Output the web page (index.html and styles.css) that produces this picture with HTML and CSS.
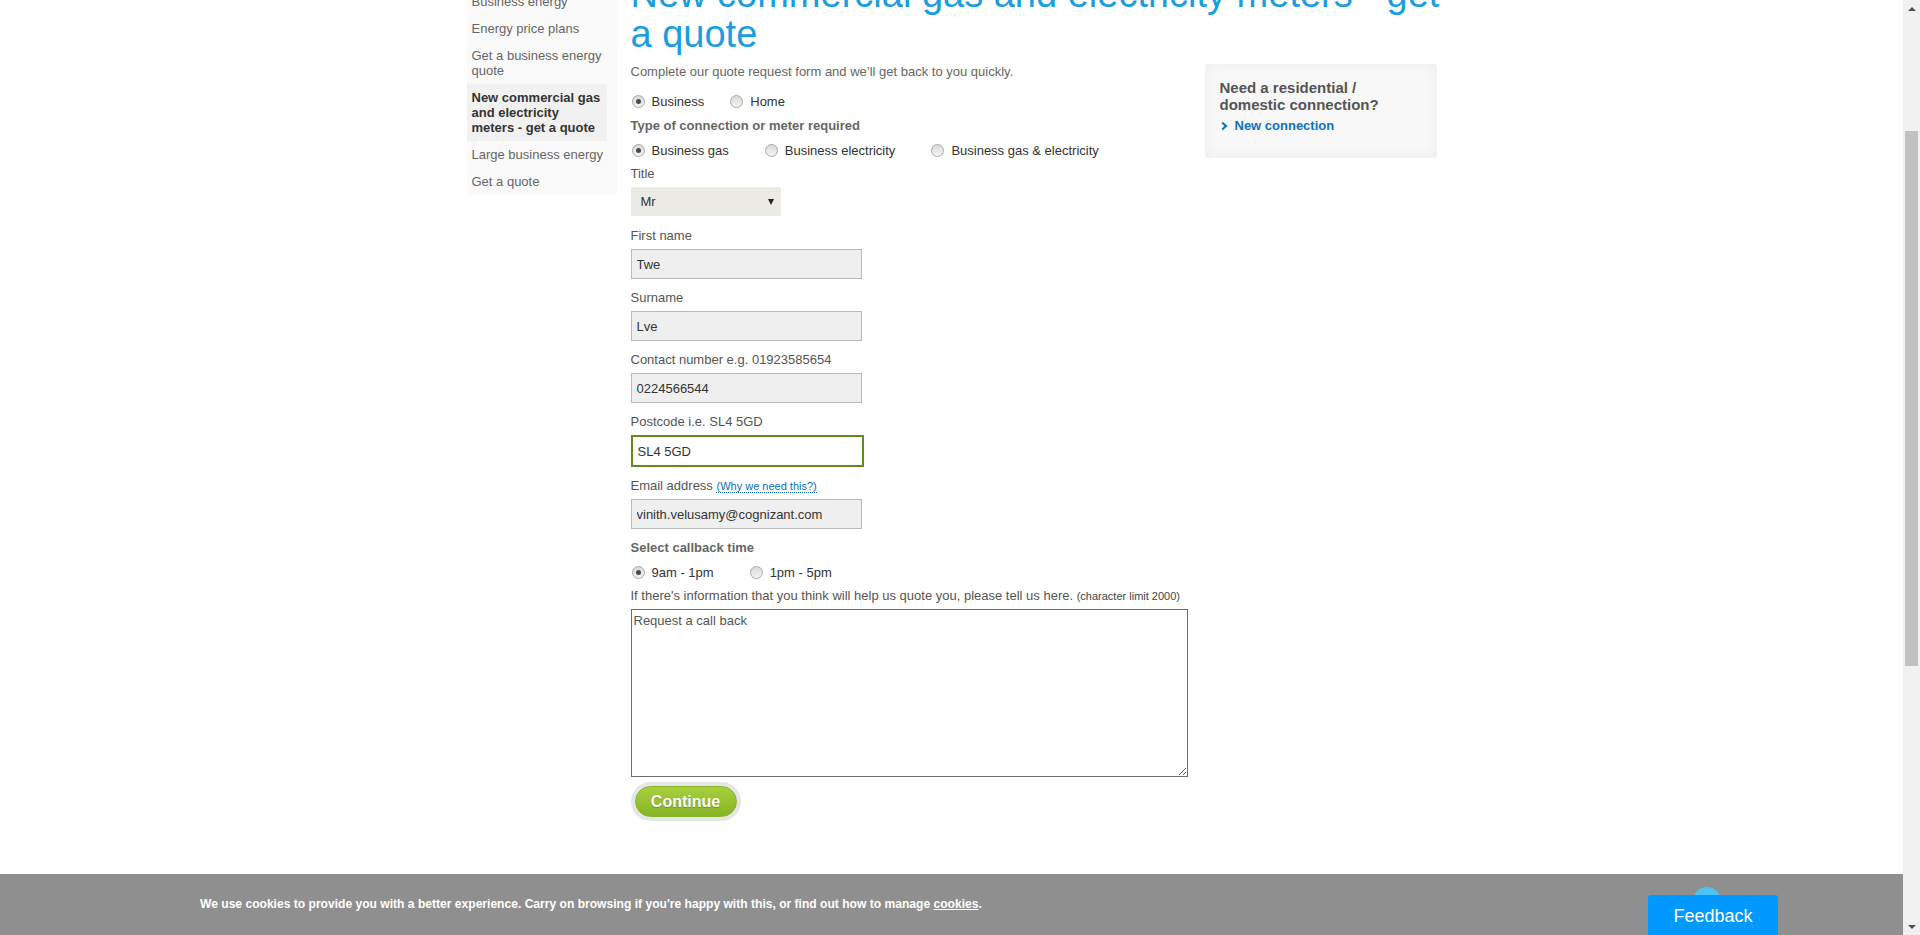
FILE: index.html
```html
<!DOCTYPE html>
<html lang="en">
<head>
<meta charset="utf-8">
<title>New commercial gas and electricity meters - get a quote</title>
<link rel="stylesheet" href="styles.css">
</head>
<body>
<div class="screen">
  <div class="viewport">
    <div class="container">
      <nav class="sidenav">
        <ul>
          <li><a href="#">Business energy</a></li>
          <li><a href="#">Energy price plans</a></li>
          <li><a href="#">Get a business energy quote</a></li>
          <li class="active"><a href="#">New commercial gas and electricity meters - get a quote</a></li>
          <li><a href="#">Large business energy</a></li>
          <li><a href="#">Get a quote</a></li>
        </ul>
      </nav>
      <main class="main">
        <h1>New commercial gas and electricity meters - get a quote</h1>
        <div class="content-row">
          <form class="quote-form">
            <p class="intro">Complete our quote request form and we’ll get back to you quickly.</p>
            <div class="radio-row radio-row--tight first-row">
              <label class="radio-option"><span class="radio checked"></span>Business</label>
              <label class="radio-option"><span class="radio"></span>Home</label>
            </div>
            <div class="field-label field-label--bold gap-6">Type of connection or meter required</div>
            <div class="radio-row gap-6">
              <label class="radio-option"><span class="radio checked"></span>Business gas</label>
              <label class="radio-option"><span class="radio"></span>Business electricity</label>
              <label class="radio-option"><span class="radio"></span>Business gas &amp; electricity</label>
            </div>
            <div class="field-label title-label">Title</div>
            <div class="select"><span>Mr</span><span class="select-arrow"></span></div>
            <div class="field-label">First name</div>
            <input class="text-input" type="text" value="Twe">
            <div class="field-label">Surname</div>
            <input class="text-input" type="text" value="Lve">
            <div class="field-label">Contact number e.g. 01923585654</div>
            <input class="text-input" type="text" value="0224566544">
            <div class="field-label">Postcode i.e. SL4 5GD</div>
            <input class="text-input text-input--focus" type="text" value="SL4 5GD">
            <div class="field-label">Email address <a class="why-link" href="#">(Why we need this?)</a></div>
            <input class="text-input" type="text" value="vinith.velusamy@cognizant.com">
            <div class="field-label field-label--bold callback-label">Select callback time</div>
            <div class="radio-row gap-6">
              <label class="radio-option"><span class="radio checked"></span>9am - 1pm</label>
              <label class="radio-option"><span class="radio"></span>1pm - 5pm</label>
            </div>
            <div class="field-label">If there's information that you think will help us quote you, please tell us here. <span class="small">(character limit 2000)</span></div>
            <textarea class="message">Request a call back</textarea>
            <div class="btn-ring"><button type="button" class="btn-continue">Continue</button></div>
          </form>
          <aside class="side-box">
            <h3>Need a residential / domestic connection?</h3>
            <a class="side-link" href="#"><span class="chev"></span>New connection</a>
          </aside>
        </div>
      </main>
    </div>

    <div class="cookie-bar">
      <p>We use cookies to provide you with a better experience. Carry on browsing if you're happy with this, or find out how to manage <a href="#">cookies</a>.</p>
    </div>
    <div class="feedback-dot"></div>
    <div class="feedback">Feedback</div>
  </div>
  <div class="scrollbar">
    <div class="sb-btn"><span class="sb-up"></span></div>
    <div class="sb-track"><div class="sb-thumb"></div></div>
    <div class="sb-btn"><span class="sb-down"></span></div>
  </div>
</div>
</body>
</html>
```
FILE: styles.css
```css
* { box-sizing: border-box; }
html, body { margin: 0; padding: 0; height: 100%; }
body {
  font-family: "Liberation Sans", Arial, sans-serif;
  background: #fff;
  overflow: hidden;
  color: #555;
}
.screen { display: flex; height: 935px; }
.viewport { flex: 1; height: 935px; overflow: hidden; position: relative; }

/* layout */
.container {
  width: 970px;
  margin: -26px auto 0;
  display: flex;
  gap: 14px;
  align-items: flex-start;
}
.sidenav {
  width: 150px;
  margin-top: 14px;
  background: #fafafa;
  padding-right: 10px;
}
.sidenav ul { list-style: none; margin: 0; padding: 0; }
.sidenav li { padding: 6px 3px 6px 5px; font-size: 13px; line-height: 15px; }
.sidenav li a { color: #666; text-decoration: none; }
.sidenav li.active { background: #f1f1f1; }
.sidenav li.active a { color: #333; font-weight: bold; }

.main { width: 806px; }
.main h1 {
  font-size: 38px;
  line-height: 40px;
  font-weight: normal;
  color: #1a9ee0;
  margin: 0 -8px 9px 0;
}
.content-row { display: flex; justify-content: space-between; align-items: flex-start; }
.quote-form { width: 557px; }

.intro { margin: 0 0 11px; font-size: 13px; line-height: 18px; color: #666; }

.radio-row { display: flex; align-items: center; height: 18px; font-size: 13px; color: #333; }
.radio-option { display: flex; align-items: center; margin-right: 35px; }
.radio-row--tight .radio-option { margin-right: 25px; }
.first-row { margin-bottom: 7px; }
.radio {
  width: 13px; height: 13px;
  border-radius: 50%;
  border: 1px solid #a9a9a9;
  background: linear-gradient(#d9d9d9, #f4f4f4);
  margin: 0 7px 0 1px;
  display: flex; align-items: center; justify-content: center;
}
.radio.checked::after {
  content: "";
  width: 5px; height: 5px; border-radius: 50%;
  background: #4b4b4b;
}

.field-label { display: block; font-size: 13px; line-height: 18px; color: #555; margin-bottom: 4px; }
.field-label--bold { font-weight: bold; color: #666; }
.title-label { margin-top: 1px; }
.callback-label { margin-bottom: 6px; }
.gap-6 { margin-bottom: 6px; }
.small { font-size: 11px; color: #444; }
.why-link { font-size: 11px; color: #0b6dc0; text-decoration: none; border-bottom: 1px dotted #0b6dc0; }

.select {
  width: 150px; height: 29px;
  background: #ebeae4;
  display: flex; align-items: center; justify-content: space-between;
  padding: 0 7px 0 10px;
  font-size: 13px; color: #333;
  margin-bottom: 11px;
}
.select-arrow {
  width: 0; height: 0;
  border-left: 3.5px solid transparent;
  border-right: 3.5px solid transparent;
  border-top: 6px solid #222;
}

.text-input {
  display: block;
  width: 231px; height: 30px;
  border: 1px solid #b9b9b9;
  background: #efefef;
  font-family: "Liberation Sans", Arial, sans-serif;
  font-size: 13px; color: #333;
  padding: 0 5px;
  margin: 0 0 10px;
  outline: none;
}
.text-input--focus {
  width: 233px; height: 32px;
  border: 2px solid #5f8c1d;
  background: #fff;
  padding: 0 5px;
}

.message {
  display: block;
  width: 557px; height: 168px;
  border: 1px solid #6e6e6e;
  padding: 2px 2px;
  margin: 0;
  font-family: "Liberation Sans", Arial, sans-serif;
  font-size: 13px; line-height: 18px;
  color: #555;
  resize: both;
  outline: none;
}

.btn-ring {
  display: inline-block;
  margin-top: 5px;
  padding: 4px;
  border-radius: 20px;
  background: #e6e6e6;
}
.btn-continue {
  display: block;
  width: 102px; height: 31px;
  border-radius: 16px;
  border: 1px solid #84b523;
  background: linear-gradient(#a8d03e, #86b425);
  color: #fff;
  font-family: "Liberation Sans", Arial, sans-serif;
  font-weight: bold; font-size: 16px;
  text-shadow: 0 1px 1px rgba(0,0,0,0.25);
  padding: 0;
}

.side-box {
  width: 232px;
  margin-top: 1px;
  padding: 15px 15px 23px;
  background: #f8f8f8;
  border-radius: 3px;
  box-shadow: inset 0 0 14px rgba(0,0,0,0.05);
}
.side-box h3 { margin: 0 0 4px; font-size: 15px; line-height: 17px; color: #555; font-weight: bold; }
.side-link { display: flex; align-items: center; font-size: 13px; line-height: 18px; font-weight: bold; color: #0c72c4; text-decoration: none; }
.chev {
  width: 6px; height: 6px;
  border-right: 2px solid #0c72c4;
  border-top: 2px solid #0c72c4;
  transform: rotate(45deg);
  margin: 0 9px 0 0;
}

/* overlays */
.cookie-bar {
  position: absolute;
  left: 0; right: 0; bottom: 0;
  height: 61px;
  background: #8f8f8f;
  display: flex; align-items: center;
  padding-left: 200px;
}
.cookie-bar p { margin: 0 0 1px; color: #fff; font-size: 12.08px; font-weight: bold; line-height: 16px; }
.cookie-bar a { color: #fff; text-decoration: underline; }

.feedback-dot {
  position: absolute;
  left: 1693px; top: 887px;
  width: 28px; height: 28px; border-radius: 50%;
  background: #4cc3f4;
}
.feedback {
  position: absolute;
  left: 1648px; top: 895px;
  width: 130px; height: 50px;
  background: #0099ff;
  border-radius: 3px 3px 0 0;
  color: #fff;
  font-size: 18px; line-height: 22px;
  text-align: center;
  padding-top: 10px;
}

/* scrollbar */
.scrollbar { width: 17px; background: #f1f1f1; display: flex; flex-direction: column; }
.sb-btn { height: 17px; display: flex; align-items: center; justify-content: center; }
.sb-up { width: 0; height: 0; border-left: 4px solid transparent; border-right: 4px solid transparent; border-bottom: 4px solid #505050; }
.sb-down { width: 0; height: 0; border-left: 4px solid transparent; border-right: 4px solid transparent; border-top: 4px solid #505050; }
.sb-track { flex: 1; padding: 114px 2px 0; }
.sb-thumb { height: 535px; background: #c1c1c1; }
```
